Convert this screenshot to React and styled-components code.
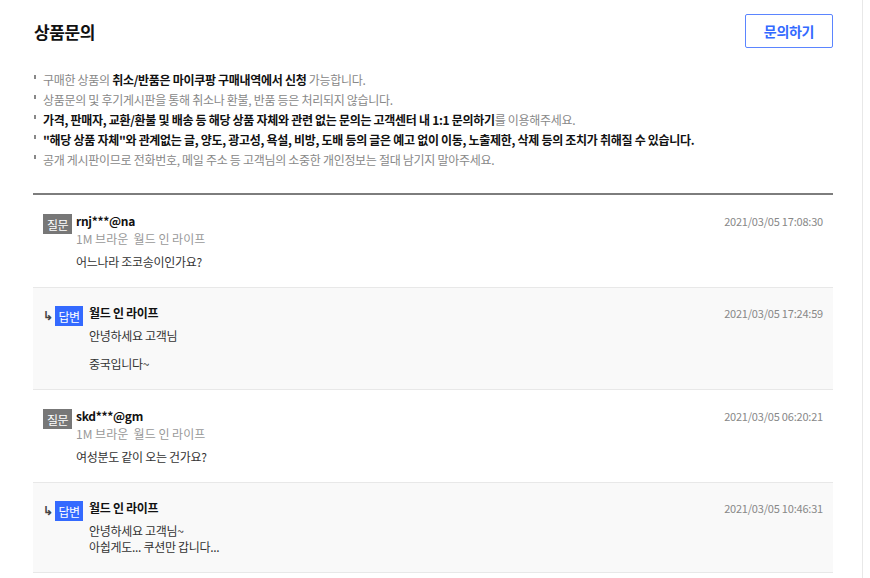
import React from "react";
import styled, { createGlobalStyle } from "styled-components";

const GlobalStyle = createGlobalStyle`
  html, body {
    margin: 0;
    padding: 0;
    background: #fff;
  }
  body {
    font-family: "Noto Sans CJK KR", "Noto Sans", sans-serif;
    color: #111;
  }
  * { box-sizing: border-box; }
`;

const notices = [
  [
    { t: "구매한 상품의 " },
    { t: "취소/반품은 마이쿠팡 구매내역에서 신청", b: true },
    { t: " 가능합니다." },
  ],
  [{ t: "상품문의 및 후기게시판을 통해 취소나 환불, 반품 등은 처리되지 않습니다." }],
  [
    { t: "가격, 판매자, 교환/환불 및 배송 등 해당 상품 자체와 관련 없는 문의는 고객센터 내 1:1 문의하기", b: true },
    { t: "를 이용해주세요." },
  ],
  [{ t: "\"해당 상품 자체\"와 관계없는 글, 양도, 광고성, 욕설, 비방, 도배 등의 글은 예고 없이 이동, 노출제한, 삭제 등의 조치가 취해질 수 있습니다.", b: true }],
  [{ t: "공개 게시판이므로 전화번호, 메일 주소 등 고객님의 소중한 개인정보는 절대 남기지 말아주세요." }],
];

const threads = [
  {
    id: 1,
    user: "rnj***@na",
    option: "1M 브라운",
    seller: "월드 인 라이프",
    question: "어느나라 조코송이인가요?",
    date: "2021/03/05 17:08:30",
    answer: {
      date: "2021/03/05 17:24:59",
      paragraphs: [["안녕하세요 고객님"], ["중국입니다~"]],
    },
  },
  {
    id: 2,
    user: "skd***@gm",
    option: "1M 브라운",
    seller: "월드 인 라이프",
    question: "여성분도 같이 오는 건가요?",
    date: "2021/03/05 06:20:21",
    answer: {
      date: "2021/03/05 10:46:31",
      paragraphs: [["안녕하세요 고객님~", "아쉽게도... 쿠션만 갑니다..."]],
    },
  },
];

export default function App() {
  return (
    <Page>
      <GlobalStyle />
      <Section>
        <Header>
          <Title>상품문의</Title>
          <AskButton type="button">문의하기</AskButton>
        </Header>

        <NoticeList>
          {notices.map((parts, i) => (
            <NoticeItem key={i}>
              {parts.map((p, j) => (p.b ? <strong key={j}>{p.t}</strong> : <span key={j}>{p.t}</span>))}
            </NoticeItem>
          ))}
        </NoticeList>

        <Threads>
          {threads.map((q) => (
            <React.Fragment key={q.id}>
              <QuestionRow>
                <Badge $kind="question">질문</Badge>
                <Body>
                  <Author>{q.user}</Author>
                  <Meta>
                    {q.option}&nbsp;&nbsp;{q.seller}
                  </Meta>
                  <Content>
                    <p>{q.question}</p>
                  </Content>
                </Body>
                <DateText>{q.date}</DateText>
              </QuestionRow>
              <AnswerRow>
                <Arrow>↳</Arrow>
                <Badge $kind="answer">답변</Badge>
                <Body>
                  <Author>{q.seller}</Author>
                  <Content>
                    {q.answer.paragraphs.map((lines, k) => (
                      <p key={k}>
                        {lines.map((l, m) => (
                          <React.Fragment key={m}>
                            {m > 0 && <br />}
                            {l}
                          </React.Fragment>
                        ))}
                      </p>
                    ))}
                  </Content>
                </Body>
                <DateText>{q.answer.date}</DateText>
              </AnswerRow>
            </React.Fragment>
          ))}
        </Threads>
      </Section>
    </Page>
  );
}

const Page = styled.div`
  width: 863px;
  min-height: 100vh;
  border-right: 1px solid #e8e8e8;
`;

const Section = styled.section`
  width: 833px;
  padding-left: 33px;
  padding-top: 14px;
`;

const Header = styled.header`
  display: flex;
  justify-content: space-between;
  align-items: center;
  height: 34px;
`;

const Title = styled.h2`
  margin: 0;
  padding-left: 1px;
  font-size: 17px;
  font-weight: 700;
  letter-spacing: -0.4px;
  color: #111;
`;

const AskButton = styled.button`
  width: 88px;
  height: 34px;
  background: #fff;
  border: 1px solid #5b85ff;
  border-radius: 2px;
  color: #346aff;
  font-family: inherit;
  font-size: 14px;
  font-weight: 700;
  letter-spacing: -0.3px;
  padding: 0;
`;

const NoticeList = styled.ul`
  list-style: none;
  margin: 22px 0 0;
  padding: 0;
`;

const NoticeItem = styled.li`
  position: relative;
  padding-left: 10px;
  font-size: 12px;
  line-height: 20px;
  color: #888;
  letter-spacing: -0.3px;

  &::before {
    content: "";
    position: absolute;
    left: 1px;
    top: 5px;
    width: 2px;
    height: 4px;
    background: #888;
  }

  strong {
    color: #111;
    font-weight: 700;
  }
`;

const Threads = styled.div`
  margin-top: 23px;
  border-top: 2px solid #7d7d7d;
`;

const Row = styled.div`
  display: flex;
  align-items: flex-start;
  padding: 18px 10px 17px 10px;
  border-bottom: 1px solid #e8e8e8;
`;

const QuestionRow = styled(Row)`
  background: #fff;
`;

const AnswerRow = styled(Row)`
  background: #f9f9f9;
  padding-top: 17px;
`;

const Arrow = styled.span`
  width: 12px;
  font-size: 12px;
  font-weight: 700;
  line-height: 18px;
  color: #444;
  margin-top: 1px;
`;

const Badge = styled.span`
  flex: none;
  width: ${(p) => (p.$kind === "answer" ? "28px" : "29px")};
  height: 20px;
  margin-top: 1px;
  margin-right: ${(p) => (p.$kind === "answer" ? "6px" : "4px")};
  display: flex;
  align-items: center;
  justify-content: center;
  font-size: 12px;
  letter-spacing: -0.5px;
  color: #fff;
  background: ${(p) => (p.$kind === "answer" ? "#346aff" : "#777")};
`;

const Body = styled.div`
  flex: 1;
  display: flex;
  flex-direction: column;
`;

const Author = styled.div`
  font-size: 12px;
  font-weight: 700;
  line-height: 16px;
  letter-spacing: -0.3px;
  color: #111;
`;

const Meta = styled.div`
  margin-top: 2px;
  font-size: 12px;
  line-height: 16px;
  color: #999;
`;

const Content = styled.div`
  margin-top: 7px;
  font-size: 12px;
  line-height: 16px;
  letter-spacing: -0.3px;
  color: #333;

  p {
    margin: 0;
  }
  p + p {
    margin-top: 12px;
  }
`;

const DateText = styled.span`
  flex: none;
  font-size: 11px;
  line-height: 16px;
  letter-spacing: -0.2px;
  color: #888;
`;
